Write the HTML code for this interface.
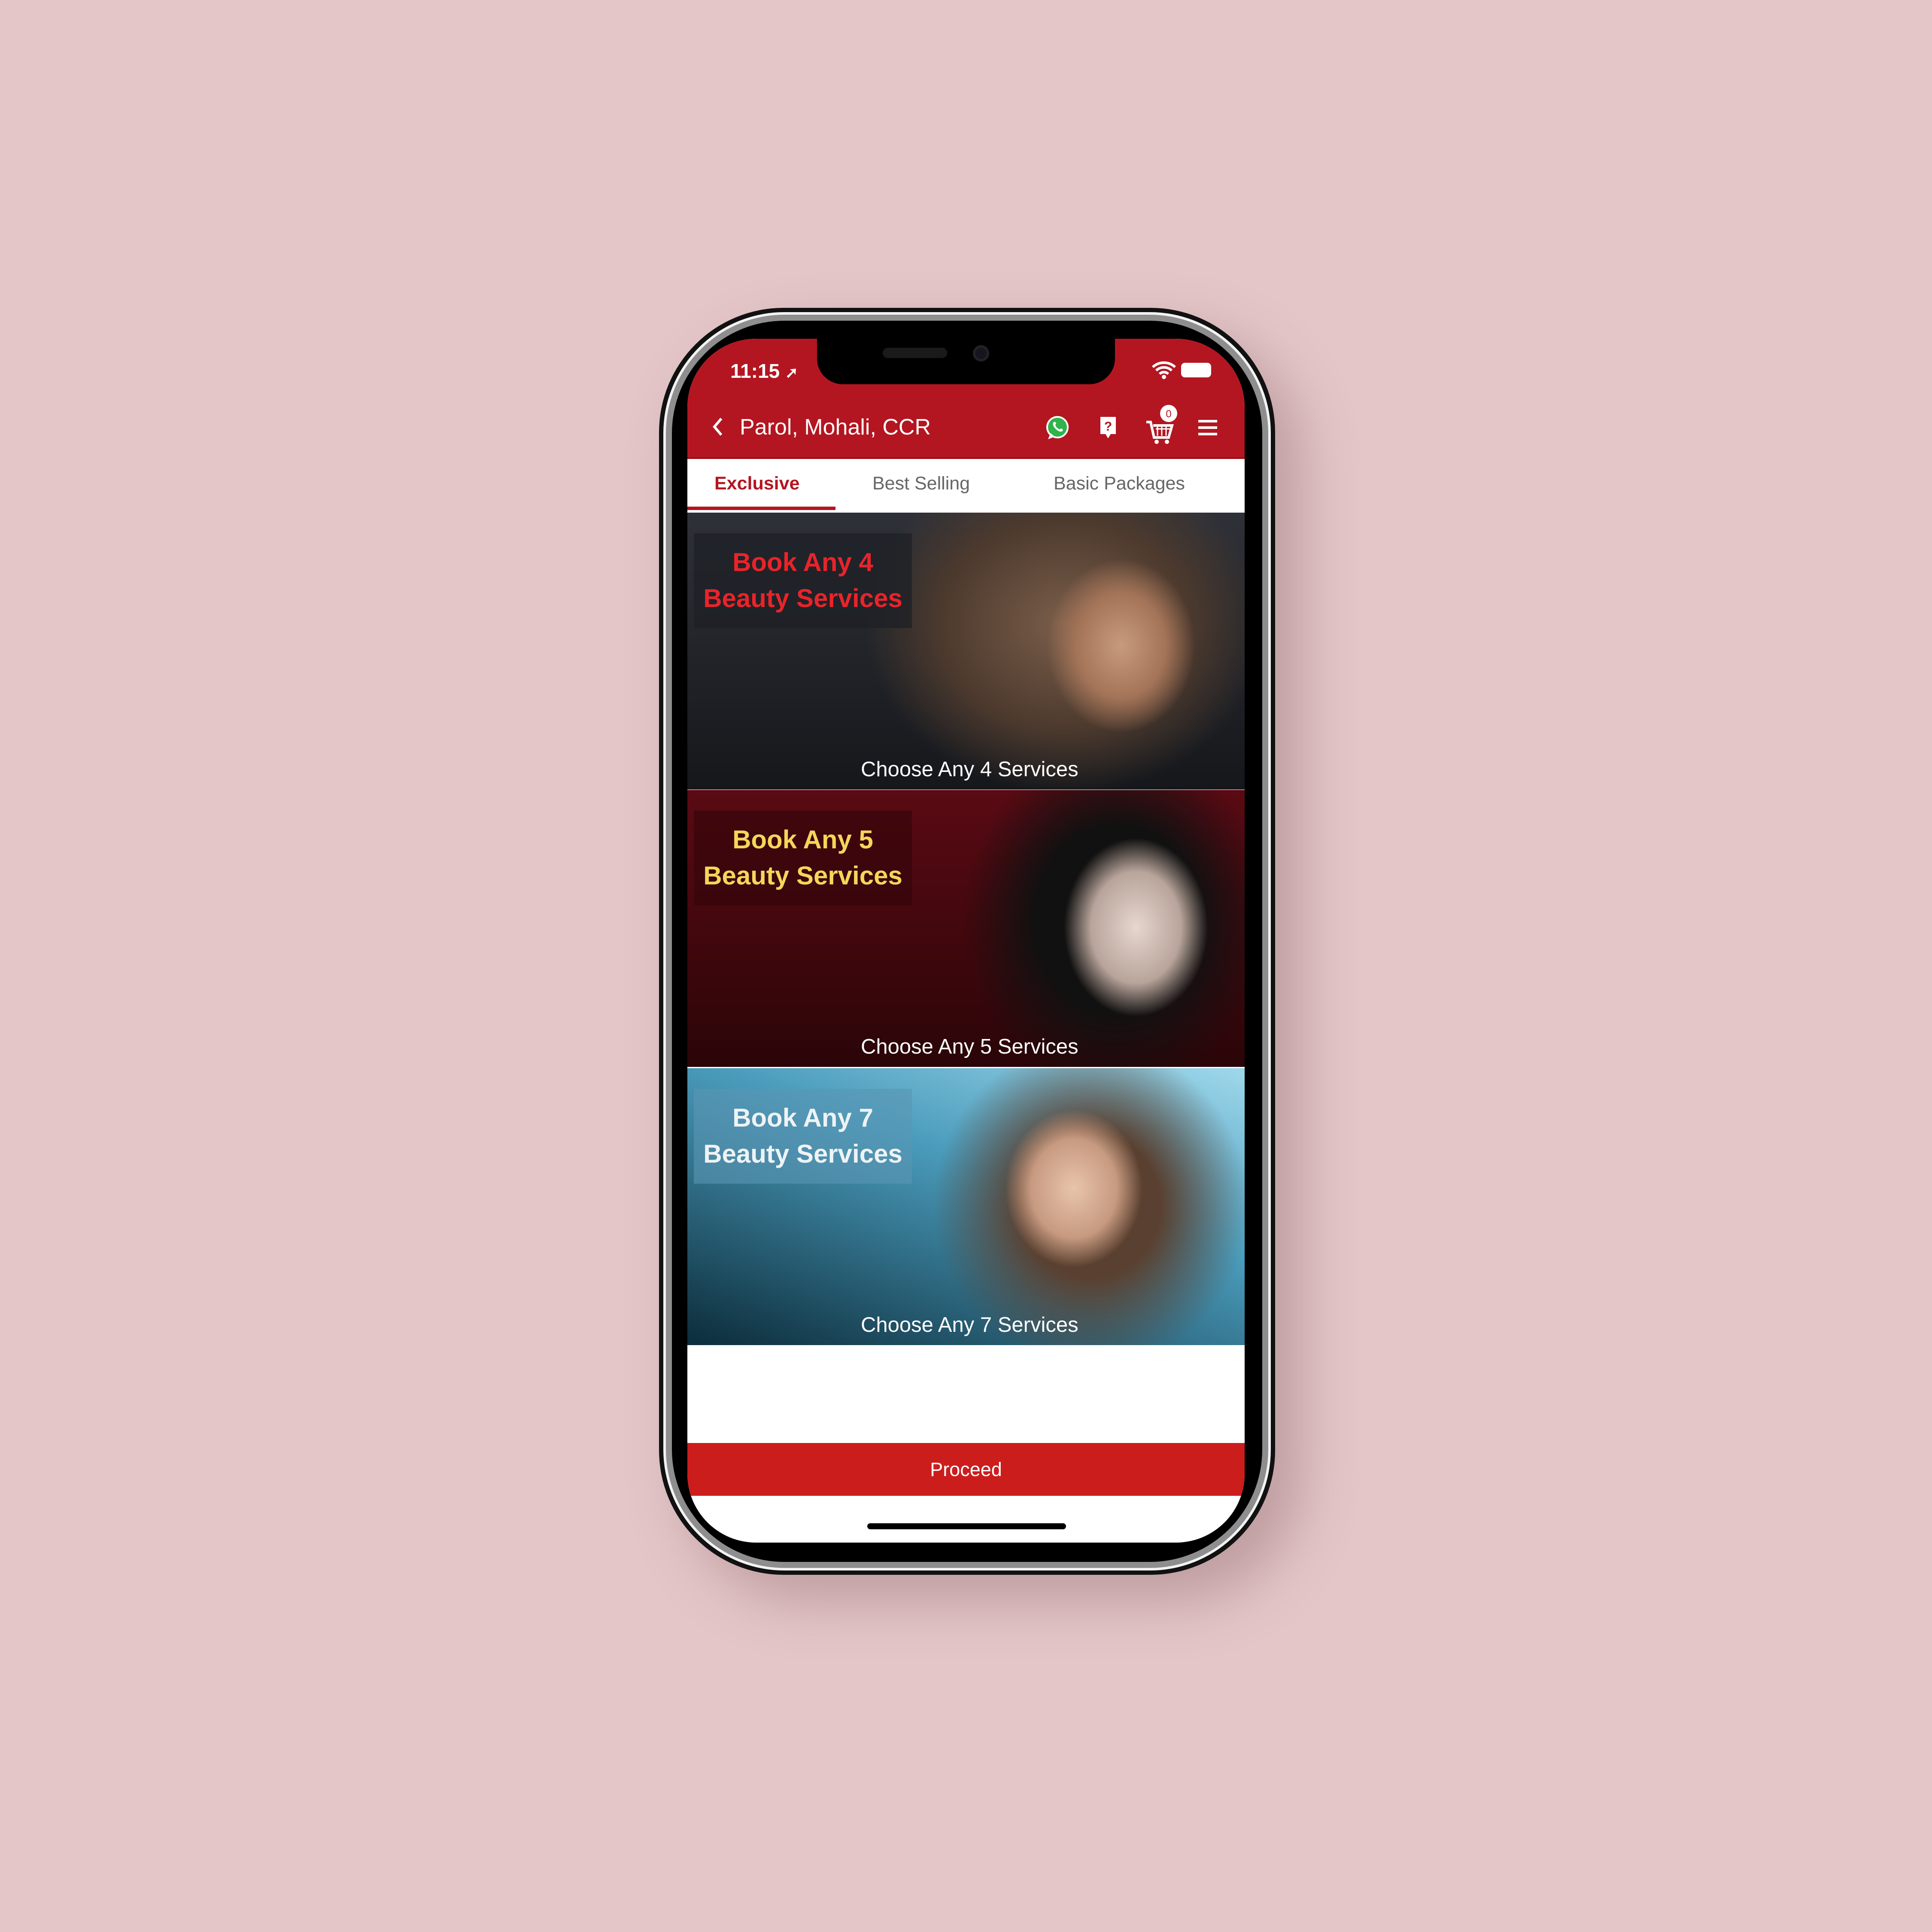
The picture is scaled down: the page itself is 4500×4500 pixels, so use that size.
<!DOCTYPE html>
<html><head><meta charset="utf-8"><style>
*{margin:0;padding:0;box-sizing:border-box}
body{width:4500px;height:4500px;background:#e4c6c8;position:relative;overflow:hidden;font-family:"Liberation Sans",sans-serif}
.abs{position:absolute}
#outer{left:1535px;top:717px;width:1435px;height:2951px;border-radius:290px;background:#111;box-shadow:60px 60px 140px rgba(120,80,85,.35)}
#band{left:1545px;top:727px;width:1415px;height:2931px;border-radius:282px;background:#8e8e8e;border:6px solid #f2f2f2}
#bezel{left:1565px;top:747px;width:1375px;height:2891px;border-radius:262px;background:#000}
#screen{left:1601px;top:789px;width:1298px;height:2804px;border-radius:160px;background:#fff;overflow:hidden}
.red{background:#b31621}
.tab{font-size:43px;top:313px;color:#666;z-index:2}
.ban{left:0;width:1298px;height:645px;overflow:hidden}
.box{left:15px;width:508px;height:221px;text-align:center;font-weight:bold;font-size:60px;line-height:84px;padding-top:26px}
.cap{left:404px;color:#fff;font-size:49px}
</style></head><body>
<div id="outer" class="abs"></div>
<div id="band" class="abs"></div>
<div id="bezel" class="abs"></div>
<div id="screen" class="abs">
  <div class="abs red" style="left:0;top:0;width:1298px;height:276px"></div>
  <div class="abs" style="left:302px;top:-10px;width:694px;height:116px;background:#000;border-radius:0 0 60px 60px"></div>
  <div class="abs" style="left:455px;top:21px;width:150px;height:24px;background:#1a1a1a;border-radius:12px"></div>
  <div class="abs" style="left:665px;top:15px;width:38px;height:38px;background:#151520;border-radius:50%;border:6px solid #222"></div>
  <div class="abs" style="left:100px;top:48px;color:#fff;font-size:46px;font-weight:bold">11:15 <span style="font-size:36px">➚</span></div>
  <svg class="abs" style="left:1080px;top:50px" width="60" height="44" viewBox="0 0 60 44"><path d="M4 16a38 38 0 0 1 52 0M12 24a26 26 0 0 1 36 0M20 32a14 14 0 0 1 20 0" stroke="#fff" stroke-width="6" fill="none"/><circle cx="30" cy="39" r="5" fill="#fff"/></svg>
  <div class="abs" style="left:1150px;top:56px;width:70px;height:34px;background:#fff;border-radius:9px"></div>
  <svg class="abs" style="left:55px;top:180px" width="30" height="50" viewBox="0 0 30 50"><path d="M24 6L8 25l16 19" stroke="#fff" stroke-width="6" fill="none"/></svg>
  <div class="abs" style="left:122px;top:176px;color:#fff;font-size:52px">Parol, Mohali, CCR</div>
  <svg class="abs" style="left:832px;top:176px" width="60" height="64" viewBox="0 0 60 64"><circle cx="30" cy="30" r="26" fill="#fff"/><circle cx="30" cy="30" r="22" fill="#2fb34a"/><path d="M8 58l6-14 10 8z" fill="#fff"/><path d="M20 20c2-4 6-3 7 1l-2 4c2 5 5 8 10 10l4-2c4 1 5 5 1 7-8 3-23-12-20-20z" fill="#fff"/></svg>
  <svg class="abs" style="left:958px;top:178px" width="44" height="60" viewBox="0 0 44 60"><path d="M4 4h36v40H28l-6 10-6-10H4z" fill="#fff"/><text x="22" y="36" font-size="30" font-weight="bold" text-anchor="middle" fill="#b31621" font-family="Liberation Sans">?</text></svg>
  <svg class="abs" style="left:1065px;top:150px" width="80" height="100" viewBox="0 0 80 100"><path d="M4 44h10l8 36h34l8-28H20" stroke="#fff" stroke-width="6" fill="none"/><path d="M26 60h34M30 52v24M40 52v24M50 52v24" stroke="#fff" stroke-width="3"/><circle cx="28" cy="90" r="5" fill="#fff"/><circle cx="52" cy="90" r="5" fill="#fff"/><circle cx="56" cy="24" r="20" fill="#fff"/><text x="56" y="33" font-size="24" text-anchor="middle" fill="#b31621" font-family="Liberation Sans">0</text></svg>
  <svg class="abs" style="left:1188px;top:186px" width="48" height="42" viewBox="0 0 48 42"><path d="M2 6h44M2 21h44M2 36h44" stroke="#fff" stroke-width="6"/></svg>
  <div class="abs" style="left:0;top:276px;width:1298px;height:4px;background:#9b0f18"></div>
  <div class="abs tab" style="left:63px;color:#b31621;font-weight:bold">Exclusive</div>
  <div class="abs tab" style="left:431px">Best Selling</div>
  <div class="abs tab" style="left:853px">Basic Packages</div>
  <div class="abs" style="left:0;top:391px;width:345px;height:8px;background:#b31621"></div>
  <!-- banner 1 -->
  <div class="abs ban" style="top:405px;background:radial-gradient(ellipse 230px 270px at 1010px 310px,#c79a7e 0%,#a47458 45%,transparent 75%),radial-gradient(ellipse 520px 440px at 880px 260px,#7a5e4a 0%,#4d3a2e 55%,transparent 90%),linear-gradient(180deg,#2e3138,#15171b)">
    <div class="abs box" style="top:48px;background:rgba(30,32,38,.75);color:#e8242a">Book Any 4<br>Beauty Services</div>
    <div class="abs cap" style="top:570px">Choose Any 4 Services</div>
  </div>
  <!-- banner 2 -->
  <div class="abs ban" style="top:1051px;background:radial-gradient(ellipse 210px 260px at 1045px 320px,#e6d7cf 0%,#b8a49a 50%,transparent 80%),radial-gradient(ellipse 420px 480px at 1000px 300px,#111 45%,transparent 85%),linear-gradient(180deg,#5a0a13,#2a0508)">
    <div class="abs box" style="top:48px;background:rgba(50,5,10,.6);color:#f5d65a">Book Any 5<br>Beauty Services</div>
    <div class="abs cap" style="top:570px">Choose Any 5 Services</div>
  </div>
  <!-- banner 3 -->
  <div class="abs ban" style="top:1699px;background:radial-gradient(ellipse 200px 230px at 900px 280px,#e8c4ac 0%,#c79a80 50%,transparent 80%),radial-gradient(ellipse 460px 480px at 940px 320px,#5a4030 35%,transparent 80%),linear-gradient(200deg,#9fd8ec 0%,#4a9cbc 40%,#0c2c3a 100%)">
    <div class="abs box" style="top:48px;background:rgba(90,150,180,.6);color:#eef3f5">Book Any 7<br>Beauty Services</div>
    <div class="abs cap" style="top:570px">Choose Any 7 Services</div>
  </div>
  <div class="abs" style="left:0;top:2572px;width:1298px;height:123px;background:#cc1d1d;color:#fff;font-size:45px;text-align:center;line-height:123px">Proceed</div>
  <div class="abs" style="left:419px;top:2759px;width:463px;height:14px;background:#000;border-radius:7px"></div>
</div>
</body></html>
